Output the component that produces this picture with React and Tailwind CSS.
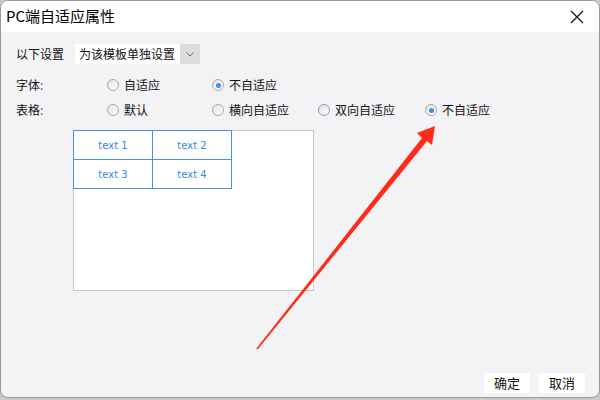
import React from 'react';

const Radio = ({ checked, hover }) => (
    <span
        className={`w-[12px] h-[12px] rounded-full border ${hover ? 'border-[#7f9db9]' : 'border-[#a8a8a8]'} bg-gradient-to-br from-[#e4e4e4] to-white flex items-center justify-center shrink-0`}
    >
        {checked && <span className="w-[5px] h-[5px] rounded-full bg-[#3d8bf0]"></span>}
    </span>
);

const Option = ({ label, checked, hover, w }) => (
    <div className={`flex items-center gap-[5px] ${w}`}>
        <Radio checked={checked} hover={hover} />
        <span>{label}</span>
    </div>
);

const App = () => {
    return (
        <div
            className="w-[600px] h-[400px] bg-[#c9c9c9] relative overflow-hidden text-[12px] text-[#111]"
            style={{ fontFamily: '"Microsoft YaHei", "Noto Sans CJK SC", sans-serif' }}
        >
            <div className="w-[600px] h-[398px] rounded-[8px] border border-[#9a9a9a] overflow-hidden flex flex-col bg-[#f3f3f5]">
                {/* Title bar */}
                <div className="h-[31px] bg-white flex items-center justify-between pl-[5px] pr-[15px] shrink-0">
                    <span className="text-[15px] text-black">PC端自适应属性</span>
                    <svg width="14" height="14" viewBox="0 0 14 14">
                        <path d="M1 1 L13 13 M13 1 L1 13" stroke="#111" strokeWidth="1.3" />
                    </svg>
                </div>

                {/* Body */}
                <div className="flex-1 flex flex-col pl-[15px]">
                    <div className="flex items-center h-5 mt-[12px]">
                        <span className="w-[59px]">以下设置</span>
                        <div className="flex h-5 w-[125px] bg-white">
                            <span className="flex-1 px-[4px] leading-5 whitespace-nowrap">为该模板单独设置</span>
                            <span className="w-[20px] bg-[#dcdcdc] flex items-center justify-center">
                                <svg width="8" height="5" viewBox="0 0 8 5">
                                    <path d="M0.5 0.5 L4 4 L7.5 0.5" stroke="#666" fill="none" strokeWidth="1" />
                                </svg>
                            </span>
                        </div>
                    </div>

                    <div className="flex items-center h-5 mt-[11px]">
                        <span className="w-[91px]">字体<span className="text-[#6a3b8a]">:</span></span>
                        <Option label="自适应" w="w-[105px]" />
                        <Option label="不自适应" checked />
                    </div>

                    <div className="flex items-center h-5 mt-[5px]">
                        <span className="w-[91px]">表格<span className="text-[#6a3b8a]">:</span></span>
                        <Option label="默认" w="w-[105px]" />
                        <Option label="横向自适应" w="w-[106px]" />
                        <Option label="双向自适应" w="w-[107px]" hover />
                        <Option label="不自适应" checked />
                    </div>

                    <div className="ml-[57px] mt-[10px] w-[241px] h-[161px] bg-white border border-[#c8c8c8]">
                        <div
                            className="-mt-px -ml-px grid grid-cols-[79px_79px] w-[159px] border-t border-l border-[#4a8fe6] text-[10px] text-[#3d86e6]"
                            style={{ fontFamily: '"DejaVu Sans", sans-serif' }}
                        >
                            {['text 1', 'text 2', 'text 3', 'text 4'].map((t) => (
                                <div
                                    key={t}
                                    className="h-[29px] flex items-center justify-center border-b border-r border-[#4a8fe6]"
                                >
                                    {t}
                                </div>
                            ))}
                        </div>
                    </div>

                    <div className="mt-auto mb-[4px] flex justify-end gap-[9px] pr-[14px]">
                        <button className="w-[46px] h-[20px] bg-white text-[13px] leading-5">确定</button>
                        <button className="w-[46px] h-[20px] bg-white text-[13px] leading-5">取消</button>
                    </div>
                </div>
            </div>

            {/* Red annotation arrow */}
            <svg className="absolute inset-0 pointer-events-none" width="600" height="400" viewBox="0 0 600 400">
                <polygon
                    points="256,349 422,138 417,133 435,126 432,145 427,141 258,349"
                    fill="#ff2a1a"
                />
            </svg>
        </div>
    );
};

export default App;
